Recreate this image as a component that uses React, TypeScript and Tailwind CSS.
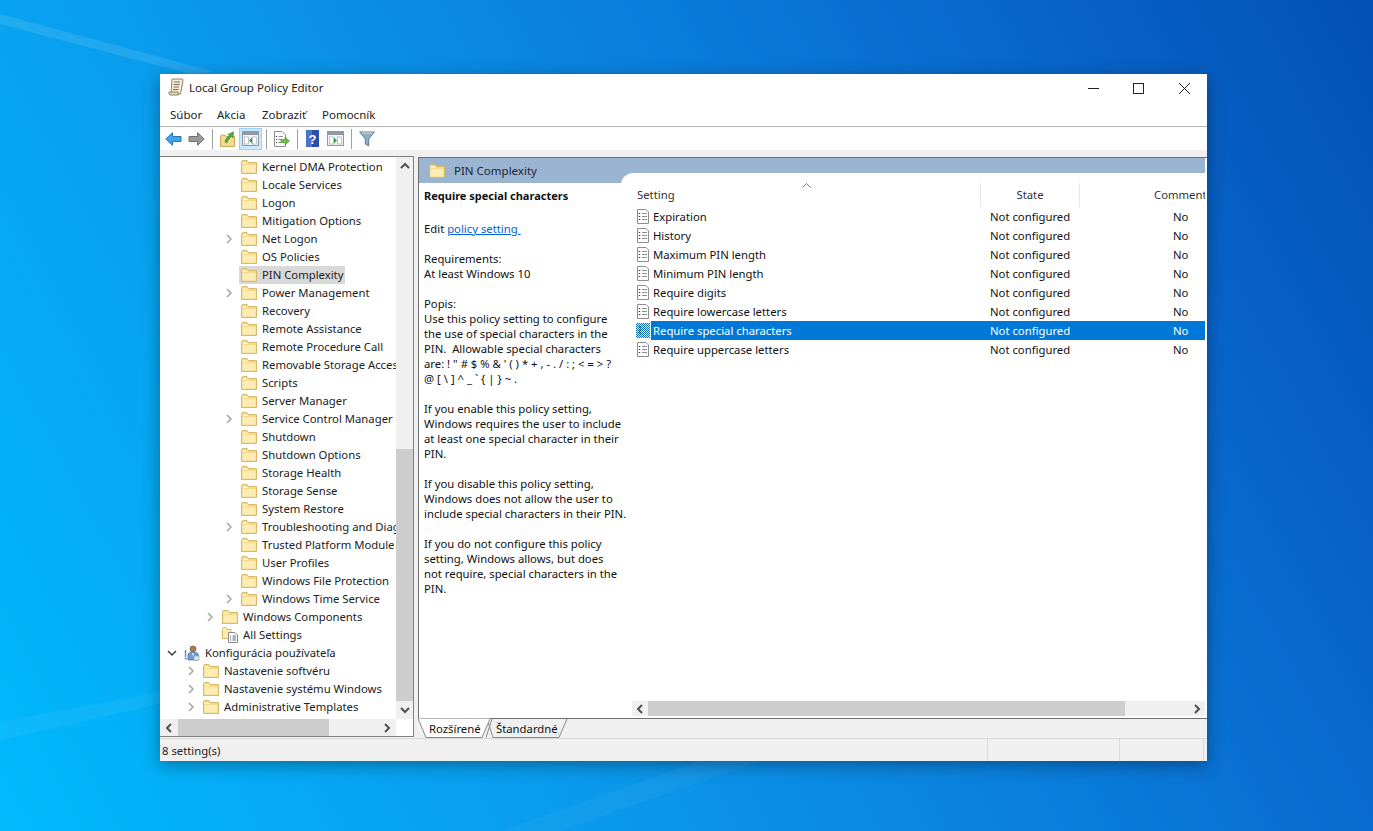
import React from 'react';

type TreeRow = { label: string; depth: number; arrow?: 'right' | 'down'; icon?: 'folder' | 'settings' | 'user'; selected?: boolean };

const treeRows: TreeRow[] = [
  { label: 'Kernel DMA Protection', depth: 3 },
  { label: 'Locale Services', depth: 3 },
  { label: 'Logon', depth: 3 },
  { label: 'Mitigation Options', depth: 3 },
  { label: 'Net Logon', depth: 3, arrow: 'right' },
  { label: 'OS Policies', depth: 3 },
  { label: 'PIN Complexity', depth: 3, selected: true },
  { label: 'Power Management', depth: 3, arrow: 'right' },
  { label: 'Recovery', depth: 3 },
  { label: 'Remote Assistance', depth: 3 },
  { label: 'Remote Procedure Call', depth: 3 },
  { label: 'Removable Storage Access', depth: 3 },
  { label: 'Scripts', depth: 3 },
  { label: 'Server Manager', depth: 3 },
  { label: 'Service Control Manager', depth: 3, arrow: 'right' },
  { label: 'Shutdown', depth: 3 },
  { label: 'Shutdown Options', depth: 3 },
  { label: 'Storage Health', depth: 3 },
  { label: 'Storage Sense', depth: 3 },
  { label: 'System Restore', depth: 3 },
  { label: 'Troubleshooting and Diagnostics', depth: 3, arrow: 'right' },
  { label: 'Trusted Platform Module Services', depth: 3 },
  { label: 'User Profiles', depth: 3 },
  { label: 'Windows File Protection', depth: 3 },
  { label: 'Windows Time Service', depth: 3, arrow: 'right' },
  { label: 'Windows Components', depth: 2, arrow: 'right' },
  { label: 'All Settings', depth: 2, icon: 'settings' },
  { label: 'Konfigurácia používateľa', depth: 0, arrow: 'down', icon: 'user' },
  { label: 'Nastavenie softvéru', depth: 1, arrow: 'right' },
  { label: 'Nastavenie systému Windows', depth: 1, arrow: 'right' },
  { label: 'Administrative Templates', depth: 1, arrow: 'right' },
];

const settings = [
  'Expiration',
  'History',
  'Maximum PIN length',
  'Minimum PIN length',
  'Require digits',
  'Require lowercase letters',
  'Require special characters',
  'Require uppercase letters',
];

const descLines = [
  '',
  'Requirements:',
  'At least Windows 10',
  '',
  'Popis:',
  'Use this policy setting to configure',
  'the use of special characters in the',
  'PIN.  Allowable special characters',
  'are: ! " # $ % & \' ( ) * + , - . / : ; < = > ?',
  '@ [ \\ ] ^ _ ` { | } ~ .',
  '',
  'If you enable this policy setting,',
  'Windows requires the user to include',
  'at least one special character in their',
  'PIN.',
  '',
  'If you disable this policy setting,',
  'Windows does not allow the user to',
  'include special characters in their PIN.',
  '',
  'If you do not configure this policy',
  'setting, Windows allows, but does',
  'not require, special characters in the',
  'PIN.',
];

const Folder = () => (
  <svg width="16" height="14" viewBox="0 0 16 14" className="shrink-0">
    <path d="M.5 2V13.5H15.5V2.5H7.5L6 .5H1.5Z" fill="#f3d98c" stroke="#d8b968" />
    <path d="M1.5 5H14.5V12.5H1.5Z" fill="#fdedb4" />
    <path d="M1.5 2.5H6L7 4H1.5Z" fill="#fff6d6" />
  </svg>
);

const SettingsFolder = () => (
  <svg width="16" height="16" viewBox="0 0 16 16" className="shrink-0">
    <path d="M.5 2V11.5H9V2.5H5L4 .5H1.5Z" fill="#fdedb4" stroke="#d8b968" />
    <path d="M6.5 5.5H13L15.5 8V15.5H6.5Z" fill="#fff" stroke="#8a8a8a" />
    <path d="M8 9H9M8 11H9M8 13H9M10.5 9H14M10.5 11H14M10.5 13H14" stroke="#4a6a8a" />
  </svg>
);

const UserIcon = () => (
  <svg width="16" height="16" viewBox="0 0 16 16" className="shrink-0">
    <circle cx="9" cy="4" r="3" fill="#a67c5a" stroke="#5a4a3a" strokeWidth=".6" />
    <path d="M4 15V10Q4 7.5 7 7.5H11Q14.5 7.5 14.5 10.5V15Z" fill="#6f9fd0" stroke="#3e6a9e" strokeWidth=".7" />
    <path d="M8 8L9 12L10 8Z" fill="#e8eef5" />
    <path d="M1.5 5V12M.5 13.5H3" stroke="#6e8aa8" strokeWidth="1.4" />
    <path d="M10 11H15V15H10Z" fill="#dfe7ef" stroke="#7f97b0" strokeWidth=".6" />
  </svg>
);

const PolicyIcon = ({ selected }: { selected?: boolean }) =>
  selected ? (
    <svg width="14" height="15" viewBox="0 0 14 15" className="shrink-0">
      <defs>
        <pattern id="dither" width="2" height="2" patternUnits="userSpaceOnUse">
          <rect width="2" height="2" fill="#0f6fc0" />
          <rect width="1" height="1" fill="#d8e8f4" />
          <rect x="1" y="1" width="1" height="1" fill="#d8e8f4" />
        </pattern>
      </defs>
      <rect width="14" height="15" fill="url(#dither)" />
      <path d="M3 4H5M3 7H5M3 10H5" stroke="#06365e" />
    </svg>
  ) : (
    <svg width="14" height="15" viewBox="0 0 14 15" className="shrink-0">
      <path d="M1.5 .5H10L12.5 3V14.5H1.5Z" fill="#fff" stroke="#8d8d8d" />
      <path d="M3.5 4V5M3.5 7V8M3.5 10V11" stroke="#333" strokeWidth="1.4" />
      <path d="M6 4.5H11M6 7.5H11M6 10.5H11" stroke="#8f8f8f" />
    </svg>
  );

const Chevron = ({ dir, color = '#a6a6a6', width = 1.5 }: { dir: 'left' | 'right' | 'up' | 'down'; color?: string; width?: number }) => {
  const d = {
    right: 'M3 1L7 5L3 9',
    left: 'M7 1L3 5L7 9',
    up: 'M1 7L5 3L9 7',
    down: 'M1 3L5 7L9 3',
  }[dir];
  return (
    <svg width="10" height="10" viewBox="0 0 10 10">
      <path d={d} fill="none" stroke={color} strokeWidth={width} />
    </svg>
  );
};

const ToolBtn = ({ children, active }: { children: React.ReactNode; active?: boolean }) => (
  <div className={`w-[23px] h-[22px] flex items-center justify-center border ${active ? 'bg-[#cce8ff] border-[#99d1ff]' : 'border-transparent'}`}>
    {children}
  </div>
);

const ToolSep = () => (
  <div className="w-[8px] flex justify-center">
    <div className="w-px h-[20px] bg-[#a0a0a0]" />
  </div>
);

const PaneIcon = ({ left }: { left?: boolean }) => (
  <svg width="17" height="15" viewBox="0 0 17 15">
    <rect x=".5" y=".5" width="16" height="14" fill="#f4f4f4" stroke="#8a9aa8" />
    <rect x="1" y="1" width="15" height="3" fill="#8e9ba6" />
    <rect x="2.5" y="6" width="4" height="7" fill="#fff" stroke="#9aa6b0" strokeWidth=".6" />
    <rect x="10.5" y="6" width="4" height="7" fill="#fff" stroke="#9aa6b0" strokeWidth=".6" />
    <path d={left ? 'M10 6.5V12.5L7 9.5Z' : 'M7 6.5V12.5L10 9.5Z'} fill="#3f9a46" />
  </svg>
);

const TreeRowItem = ({ row }: { row: TreeRow }) => (
  <div className="flex items-center h-[18px] whitespace-nowrap" style={{ paddingLeft: 4 + row.depth * 19 }}>
    <div className="w-[16px] flex justify-center shrink-0">
      {row.arrow === 'right' && <Chevron dir="right" />}
      {row.arrow === 'down' && <Chevron dir="down" color="#404040" />}
    </div>
    <div className={`flex items-center h-[18px] gap-[5px] ml-[2px] pl-[2px] pr-[2px] ${row.selected ? 'bg-[#d9d9d9]' : ''}`}>
      {row.icon === 'settings' ? <SettingsFolder /> : row.icon === 'user' ? <UserIcon /> : <Folder />}
      <span>{row.label}</span>
    </div>
  </div>
);

export default function App() {
  return (
    <div className="relative w-screen h-screen overflow-hidden pt-[74px] pl-[160px] bg-[linear-gradient(62deg,#00bafc_0%,#0a9bec_32%,#0a7fdc_58%,#0868cc_78%,#0450b4_100%)] font-['Noto_Sans',sans-serif] text-[11.3px] text-[#111]">
      {/* wallpaper light beams */}
      <svg className="absolute inset-0" width="1373" height="831" viewBox="0 0 1373 831">
        <path d="M0 14L215 72L190 74L0 24Z" fill="#fff" opacity=".1" />
        <path d="M0 722L160 692V704L0 740Z" fill="#fff" opacity=".05" />
        <path d="M560 831L760 761H700L500 831Z" fill="#fff" opacity=".04" />
      </svg>

      <div className="relative w-[1047px] h-[687px] flex flex-col bg-white shadow-[0_4px_16px_rgba(0,0,0,0.35)]">
        {/* title bar */}
        <div className="h-[26px] flex items-center pl-[8px] shrink-0">
          <svg width="16" height="18" viewBox="0 0 16 18" className="shrink-0">
            <path d="M4 1H14Q15.5 1 15 2.5L12.5 16H3Z" fill="#f6edd2" stroke="#8d8370" />
            <path d="M1 14H10L10.5 17H2Q.5 16 1 14Z" fill="#e6d8b0" stroke="#8d8370" />
            <path d="M6 4H12M5.5 6.5H11.5M5.5 9H11M5 11.5H10.5" stroke="#77706a" />
          </svg>
          <span className="ml-[5px] pt-[2px] text-[11.5px] text-[#222]">Local Group Policy Editor</span>
          <div className="ml-auto flex items-center h-full">
            <svg width="46" height="26" viewBox="0 0 46 26"><path d="M19 14.5H30" stroke="#222" /></svg>
            <svg width="46" height="26" viewBox="0 0 46 26"><rect x="18.5" y="9.5" width="10" height="10" fill="none" stroke="#222" /></svg>
            <svg width="46" height="26" viewBox="0 0 46 26"><path d="M18 9L29 20M29 9L18 20" stroke="#222" /></svg>
          </div>
        </div>

        {/* menu */}
        <div className="h-[27px] flex items-center pl-[10px] pt-[3px] border-b border-[#b4b4b4] shrink-0 text-[11.5px] text-[#222]">
          <span className="w-[47px]">Súbor</span>
          <span className="w-[45px]">Akcia</span>
          <span className="w-[60px]">Zobraziť</span>
          <span>Pomocník</span>
        </div>

        {/* toolbar */}
        <div className="h-[23px] flex items-center pl-[2px] shrink-0">
          <ToolBtn>
            <svg width="17" height="14" viewBox="0 0 17 14">
              <path d="M7.5 .7L.8 7L7.5 13.3V9.5H16V4.5H7.5Z" fill="#3fa4ea" stroke="#2a75bd" />
            </svg>
          </ToolBtn>
          <ToolBtn>
            <svg width="17" height="14" viewBox="0 0 17 14">
              <path d="M9.5 .7L16.2 7L9.5 13.3V9.5H1V4.5H9.5Z" fill="#9a9a9a" stroke="#6f6f6f" />
            </svg>
          </ToolBtn>
          <ToolSep />
          <ToolBtn>
            <svg width="15" height="16" viewBox="0 0 15 16">
              <path d="M.5 5V15.5H14.5V5.5H6L5 4H1.5Z" fill="#f4d990" stroke="#c9a85c" />
              <path d="M5 11C5.5 7.5 7.5 6 9.5 5L8 3.5L13.5 .8L13 6.8L11.5 5.5C9.5 7 7.5 9 7 12Z" fill="#49ab3c" stroke="#2f7d29" strokeWidth=".5" />
            </svg>
          </ToolBtn>
          <ToolBtn active>
            <PaneIcon left />
          </ToolBtn>
          <ToolSep />
          <ToolBtn>
            <svg width="17" height="16" viewBox="0 0 17 16">
              <path d="M1.5 .5H9L12.5 4V15.5H1.5Z" fill="#fff" stroke="#8d8d8d" />
              <path d="M3.5 5V6M3.5 8V9M3.5 11V12" stroke="#333" />
              <path d="M5.5 5.5H10M5.5 8.5H8M5.5 11.5H8" stroke="#8f8f8f" />
              <path d="M8 8.5H12V6L16.5 10L12 14V11.5H8Z" fill="#66c23f" stroke="#3f922a" strokeWidth=".6" />
            </svg>
          </ToolBtn>
          <ToolSep />
          <ToolBtn>
            <svg width="13" height="17" viewBox="0 0 13 17">
              <rect width="13" height="17" fill="#2b4fa8" />
              <rect width="6" height="17" fill="#4a74cc" />
              <text x="6.5" y="13.5" textAnchor="middle" fontSize="13" fontWeight="700" fill="#fff" fontFamily="Liberation Sans, sans-serif">?</text>
            </svg>
          </ToolBtn>
          <ToolBtn>
            <PaneIcon />
          </ToolBtn>
          <ToolSep />
          <ToolBtn>
            <svg width="16" height="16" viewBox="0 0 16 16">
              <path d="M.7 1H15.3L9.7 8V15L6.3 13V8Z" fill="#8fb0c4" stroke="#5d7d92" />
              <path d="M2.5 2H13.5" stroke="#d5e3ec" />
            </svg>
          </ToolBtn>
        </div>

        {/* panes */}
        <div className="flex-1 min-h-0 flex flex-col bg-[#f0f0f0] pt-[6px]">
          <div className="flex-1 min-h-0 flex">
            {/* tree */}
            <div className="w-[254px] shrink-0 flex flex-col bg-white border-y border-r border-[#7f7f7f] mb-[1px]">
              <div className="flex-1 min-h-0 flex">
                <div className="flex-1 min-w-0 overflow-hidden pt-px text-[#222]">
                  {treeRows.map((row) => (
                    <TreeRowItem key={row.label} row={row} />
                  ))}
                </div>
                <div className="w-[17px] shrink-0 bg-[#f0f0f0] flex flex-col items-center">
                  <div className="h-[17px] flex items-center justify-center shrink-0">
                    <Chevron dir="up" color="#505050" width={2} />
                  </div>
                  <div className="h-[275px] shrink-0" />
                  <div className="w-full h-[252px] shrink-0 bg-[#cdcdcd]" />
                  <div className="h-[17px] flex items-center justify-center shrink-0">
                    <Chevron dir="down" color="#505050" width={2} />
                  </div>
                </div>
              </div>
              <div className="h-[17px] shrink-0 flex">
                <div className="flex-1 flex items-center bg-[#f0f0f0]">
                  <div className="w-[18px] flex justify-center shrink-0">
                    <Chevron dir="left" color="#505050" width={2} />
                  </div>
                  <div className="w-[151px] h-full bg-[#cdcdcd] shrink-0" />
                  <div className="ml-auto w-[18px] flex justify-center shrink-0">
                    <Chevron dir="right" color="#505050" width={2} />
                  </div>
                </div>
                <div className="w-[17px] shrink-0" />
              </div>
            </div>

            {/* right pane */}
            <div className="ml-[4px] mt-px flex-1 min-w-0 flex flex-col border-t border-l border-[#6e6e6e] bg-white">
              <div className="h-[25px] shrink-0 mr-[2px] flex items-center pl-[10px] bg-[#9ab4d1]">
                <Folder />
                <span className="ml-[9px] text-[11.5px] text-[#1b2733]">PIN Complexity</span>
              </div>
              <div className="flex-1 min-h-0 flex">
                <div className="relative z-10 w-[202px] shrink-0 pl-[5px] pt-[5px] leading-[15px] whitespace-pre text-[#111]">
                  <div className="font-bold text-[11px]">Require special characters</div>
                  <div className="mt-[18px]">
                    Edit <span className="text-[#0066cc] underline">policy setting </span>
                  </div>
                  {descLines.map((line, i) => (
                    <div key={i} className="h-[15px]">{line}</div>
                  ))}
                </div>
                <div className="flex-1 min-w-0 -mt-[10px] mr-[2px] rounded-tl-[12px] bg-white flex flex-col pt-[10px] pl-[11px] pb-[2px] overflow-hidden">
                  <div className="relative h-[24px] shrink-0 flex items-center text-[#333]">
                    <div className="w-[349px] pl-[5px] shrink-0 h-full flex items-center border-r border-[#e5e5e5]">Setting</div>
                    <div className="w-[99px] shrink-0 h-full flex items-center justify-center border-r border-[#e5e5e5]">State</div>
                    <div className="pl-[74px] whitespace-nowrap">Comment</div>
                    <svg width="9" height="5" viewBox="0 0 9 5" className="absolute left-[170px] top-0">
                      <path d="M.5 4.5L4.5 .5L8.5 4.5" fill="none" stroke="#7a7a7a" />
                    </svg>
                  </div>
                  <div className="flex-1 min-h-0">
                    {settings.map((name, i) => {
                      const selected = i === 6;
                      return (
                        <div key={name} className="h-[19px] flex items-center pl-[4px]">
                          <div className="w-[15px] shrink-0">
                            <PolicyIcon selected={selected} />
                          </div>
                          <div className={`flex-1 h-full flex items-center pl-[2px] pt-[2px] ${selected ? 'bg-[#0078d7] text-white' : ''}`}>
                            <div className="w-[337px] shrink-0">{name}</div>
                            <div className="w-[183px] shrink-0">Not configured</div>
                            <div>No</div>
                          </div>
                        </div>
                      );
                    })}
                  </div>
                  <div className="h-[15px] shrink-0 flex items-center bg-[#f0f0f0]">
                    <div className="w-[16px] flex justify-center shrink-0">
                      <Chevron dir="left" color="#505050" width={2} />
                    </div>
                    <div className="w-[477px] h-full bg-[#cdcdcd] shrink-0" />
                    <div className="ml-auto w-[16px] flex justify-center shrink-0">
                      <Chevron dir="right" color="#505050" width={2} />
                    </div>
                  </div>
                </div>
              </div>

              {/* tabs */}
              <div className="relative h-[20px] shrink-0 -ml-px bg-[#f0f0f0] border-t border-[#6e6e6e] text-[#111]">
                <svg className="absolute left-0 -top-px" width="160" height="21" viewBox="0 0 160 21">
                  <path d="M69 1L75 19.5H141L149 1" fill="#f0f0f0" stroke="#8a8a8a" />
                  <path d="M68 19.5L74 1" fill="none" stroke="#8a8a8a" />
                  <path d="M0 .5L8 19.5H64L72 1V.5Z" fill="#fff" />
                  <path d="M0 .5L8 19.5H64L72 1" fill="none" stroke="#8a8a8a" />
                </svg>
                <div className="relative flex items-center h-full pl-[11px] pt-[2px]">
                  <span className="w-[67px]">Rozšírené</span>
                  <span>Štandardné</span>
                </div>
              </div>
            </div>
          </div>

          {/* status bar */}
          <div className="h-[23px] shrink-0 flex items-center border-t border-[#d9d9d9] pl-[2px]">
            <span className="w-[825px] pt-[2px] text-[#222]">8 setting(s)</span>
            <div className="w-[132px] h-full border-l border-[#d9d9d9]" />
            <div className="w-[85px] h-full border-x border-[#d9d9d9]" />
          </div>
        </div>
      </div>
    </div>
  );
}
